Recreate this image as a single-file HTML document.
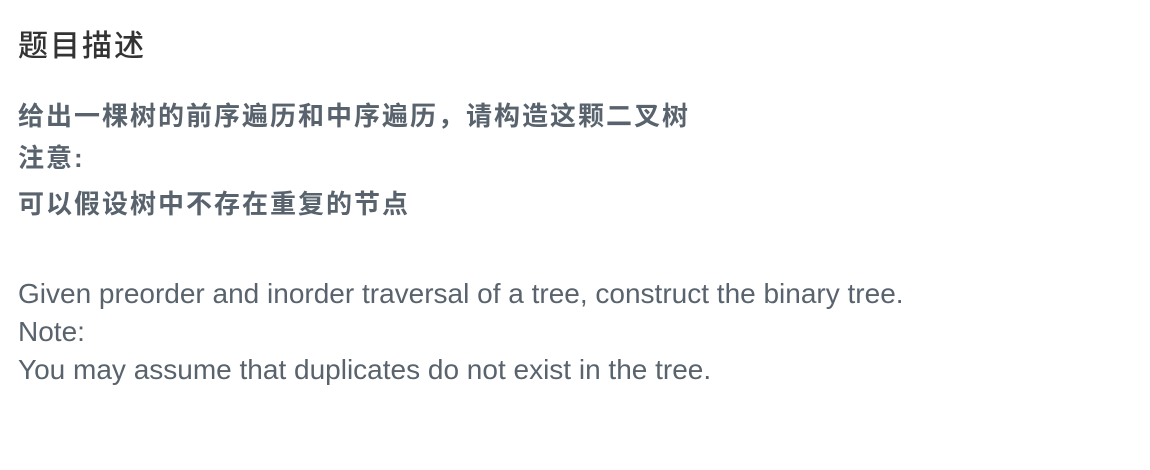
<!DOCTYPE html>
<html><head><meta charset="utf-8"><style>
body{margin:0;width:1150px;height:470px;background:#fff;font-family:"Liberation Sans","Noto Sans CJK SC",sans-serif;position:relative;overflow:hidden}
.h{position:absolute;left:18px;top:28px;font-size:30px;line-height:38px;color:#333;letter-spacing:2px;font-weight:500}
.c{position:absolute;left:18px;font-size:26px;line-height:30px;color:#59636d;letter-spacing:2px;font-weight:bold;white-space:nowrap}
.e{position:absolute;left:18px;top:275px;font-size:28px;line-height:38px;color:#59636d;white-space:nowrap}
</style></head><body>
<div class="h">题目描述</div>
<div class="c" style="top:101px">给出一棵树的前序遍历和中序遍历，请构造这颗二叉树</div>
<div class="c" style="top:143px">注意:</div>
<div class="c" style="top:189px">可以假设树中不存在重复的节点</div>
<div class="e">Given preorder and inorder traversal of a tree, construct the binary tree.<br>Note:<br>You may assume that duplicates do not exist in the tree.</div>
</body></html>
